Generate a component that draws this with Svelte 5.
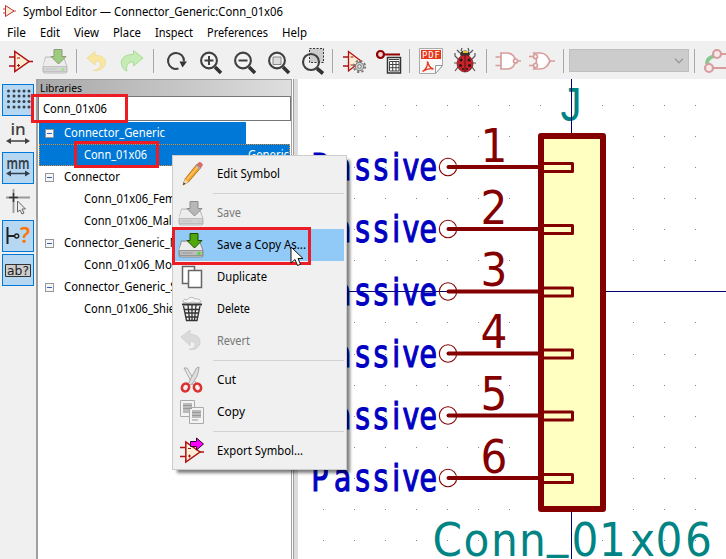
<script>
  const menus = [
    ['File', 19], ['Edit', 20], ['View', 25], ['Place', 28],
    ['Inspect', 38], ['Preferences', 61], ['Help', 25]
  ];
  const tree = [
    { name: 'Connector_Generic', w: 101, group: true, sel: 'part' },
    { name: 'Conn_01x06', w: 63, sel: 'full', desc: 'Generic' },
    { name: 'Connector', w: 56, group: true },
    { name: 'Conn_01x06_Female', w: 107 },
    { name: 'Conn_01x06_Male', w: 94 },
    { name: 'Connector_Generic_MountingPin', w: 174, group: true },
    { name: 'Conn_01x06_MountingPin', w: 140 },
    { name: 'Connector_Generic_Shielded', w: 152, group: true },
    { name: 'Conn_01x06_Shielded', w: 114 }
  ];
  const items = [
    { label: 'Edit Symbol', w: 63, icon: 'edit' }, null,
    { label: 'Save', w: 24, icon: 'save', off: true },
    { label: 'Save a Copy As...', w: 89, icon: 'save', hot: true },
    { label: 'Duplicate', w: 50, icon: 'dup' },
    { label: 'Delete', w: 33, icon: 'del' },
    { label: 'Revert', w: 33, icon: 'revert', off: true }, null,
    { label: 'Cut', w: 19, icon: 'cut' },
    { label: 'Copy', w: 28, icon: 'copy' }, null,
    { label: 'Export Symbol...', w: 86, icon: 'export' }
  ];
  const pins = [1, 2, 3, 4, 5, 6].map((n) => ({ n, y: Math.round((167 + (n - 1) * 62.15) * 2) / 2 }));
  const dots = [];
  for (let i = 0; i < 13; i++)
    for (let j = 0; j < 15; j++) dots.push([Math.round(323 + i * 31.03), Math.round(105 + j * 31.07)]);
</script>

{#snippet label(text, w, color = '#000', size = 12)}
  <svg class="label" width={w + 2} height="18" fill={color}>
    <text x="0" y="13" font-size={size} textLength={w} lengthAdjust="spacingAndGlyphs">{text}</text>
  </svg>
{/snippet}

{#snippet opamp()}
  <path d="M9 57h6M9 66h6M28 61.5h5" stroke="#b01010" stroke-width="1.4" />
  <path d="M14.8 51.5v20L29 61.5z" fill="#fbecd4" stroke="#b01010" stroke-width="1.5" />
  <path d="M17 58h3M17 65.5h3M18.5 64v3" stroke="#b01010" stroke-width="1" />
{/snippet}

{#snippet lens()}
  <circle cx="209" cy="60.5" r="7.9" fill="#f4f4f4" stroke="#404040" stroke-width="2.1" />
  <path d="M215 67l6 6" stroke="#333" stroke-width="3.6" />
{/snippet}

{#snippet drive()}
  <path d="M7 9h18l3.5 9.5v5.5l-1 1h-22l-1-1v-5.5z" fill="#d8d8d8" stroke="#8b8b8b" />
  <path d="M7.5 10h17l3 8h-23z" fill="#ececec" />
  <path d="M5 18.5h23v5H5z" fill="#bdbdbd" stroke="#888" stroke-width=".8" />
  <path d="M7 21h11" stroke="#999" /><path d="M23 20h3v3h-3z" fill="#51db34" />
  <path d="M15.5 1.5h8v7h4L20 16l-7.5-7.5h3z" fill="#50a80a" stroke="#214c08" />
{/snippet}

<div class="app">
  <div class="title">
    <svg width="14" height="16" viewBox="2 4 14 16" fill="none">
      <path d="M3 9h3M3 13h3M12 11h4" stroke="#c44" />
      <path d="M5.5 5.5v11L14 11z" fill="#fbecd4" stroke="#b33" />
    </svg>
    {@render label('Symbol Editor — Connector_Generic:Conn_01x06', 260)}
  </div>
  <nav>
    {#each menus as [m, w]}<span>{@render label(m, w)}</span>{/each}
  </nav>

  <div class="toolbar">
    <svg viewBox="4 44 34 34" fill="none">{@render opamp()}</svg>
    <svg viewBox="-0.5 -4 34 34" fill="none" opacity=".5"><g>{@render drive()}</g></svg>
    <i></i>
    <svg viewBox="81 44 34 34" fill="none">
      <path d="M87 58l8-6.5v4c8-.5 12.500 4 9.500 10-2 4-6 5.500-11 5 5-1 7.500-3.500 7-6.500-.5-2.500-2.500-3-5.500-3v4z" fill="#f9e6a1" stroke="#f0dd9c" />
    </svg>
    <svg viewBox="115 44 34 34" fill="none">
      <path d="M143 58l-9.500-7.500v4c-8-.5-13.500 4-12 10 1 4 3 6 5.500 6.500-1.500-5 .5-9 6.500-9v4z" fill="#c6ecb6" stroke="#a9dc98" />
    </svg>
    <i></i>
    <svg viewBox="158 44 34 34" fill="none">
      <path d="M178.500 68.500a8 8 0 1 1 5.500-7" stroke="#404040" stroke-width="2" />
      <path d="M179.500 61.500h7.500l-4.500 6z" fill="#333" />
    </svg>
    <svg viewBox="192 44 34 34" fill="none">
      {@render lens()}<path d="M204.500 60.500h9M209 56v9" stroke="#404040" stroke-width="2" />
    </svg>
    <svg viewBox="192 44 34 34" fill="none">
      {@render lens()}<path d="M204.500 60.500h9" stroke="#404040" stroke-width="2" />
    </svg>
    <svg viewBox="192 44 34 34" fill="none">
      {@render lens()}<path d="M205 57h8v7.500h-8z" fill="#ddd" stroke="#888" />
    </svg>
    <svg viewBox="294 44 34 34" fill="none">
      <path d="M309.500 48.500h14v14h-14z" fill="#ccc" stroke="#333" stroke-dasharray="2 1.500" />
      <circle cx="311" cy="62" r="8" stroke="#404040" stroke-width="2.100" />
      <path d="M317 68.500l6 5" stroke="#333" stroke-width="3.600" />
    </svg>
    <i></i>
    <svg viewBox="337 44 34 34" fill="none">
      <path d="M343 57h5M343 66h5" stroke="#b01010" stroke-width="1.400" />
      <path d="M348.500 51.500v19.500L361 61z" fill="#fbecd4" stroke="#b01010" stroke-width="1.300" />
      <path d="M350.500 57h3M350.500 65h3" stroke="#b01010" />
      <circle cx="359.500" cy="66.500" r="5.700" stroke="#777" stroke-width="1.800" stroke-dasharray="2.300 2.170" />
      <circle cx="359.500" cy="66.500" r="4.200" fill="#ccc" stroke="#777" />
      <circle cx="359.500" cy="66.500" r="1.800" fill="#efefef" stroke="#777" />
    </svg>
    <svg viewBox="371 44 34 34" fill="none">
      <path d="M383 54.500h17" stroke="#900000" stroke-width="2" />
      <circle cx="380.500" cy="54.500" r="3.500" fill="#f4d4d4" stroke="#900000" stroke-width="2.200" />
      <path d="M387.500 57.500h13v15.500h-13z" fill="#fff" stroke="#333" stroke-width="1.500" />
      <path d="M389.500 61.500h9.500v9.500h-9.500zM389.500 64.500h9.500M389.500 67.700h9.500M392.700 61.500v9.500M396 61.500v9.500M389 59.500h10" stroke="#444" />
    </svg>
    <i></i>
    <svg viewBox="414 44 34 34" fill="none">
      <path d="M419.500 48.500h23v17l-7 8h-16z" fill="#f7f7f7" stroke="#aaa" />
      <path d="M435.500 73.500v-8h7z" fill="#fff" stroke="#999" />
      <path d="M421 50h20v9h-20z" fill="#e8381c" />
      <text x="422" y="58" font-family="DejaVu Sans Mono" font-size="9" textLength="18" fill="#fff">PDF</text>
      <path d="M422.500 71.500c4-2 5.500-7 5-10 1 4 3 7 6 7.500-4-1-7 0-11 2.500z" stroke="#e8381c" stroke-width="1.300" />
    </svg>
    <svg viewBox="448 44 34 34" fill="none">
      <path d="M460 53l-3-3M470 53l3-3M458 59l-3-3v-3M472 59l3-3v-3M457 63h-3M473 63h3M458 67l-3 4M472 67l3 4M461 51l1-3M469 51l-1-3" stroke="#555" stroke-width="1.200" />
      <ellipse cx="465" cy="54" rx="5" ry="3.500" fill="#333" /><path d="M463 52h5" stroke="#e5c530" stroke-width="2" />
      <ellipse cx="465" cy="63.500" rx="8" ry="8.500" fill="#c8222a" stroke="#702020" stroke-width=".8" />
      <path d="M465 55v17" stroke="#401010" stroke-width=".8" />
      <g fill="#221818"><circle cx="461" cy="60" r="1.500" /><circle cx="469" cy="60" r="1.500" /><circle cx="460.500" cy="65.500" r="1.500" /><circle cx="469.500" cy="65.500" r="1.500" /><circle cx="463" cy="69" r="1" /><circle cx="467" cy="69" r="1" /></g>
    </svg>
    <i></i>
    <svg viewBox="491 44 34 34" fill="none" stroke="#d89c9c" stroke-width="1.700">
      <path d="M495.500 57h5M495.500 65.500h5M517 61h4" />
      <path d="M501 53h6c11 0 11 16 0 16h-6z" fill="#fff" /><circle cx="515.500" cy="61" r="2" fill="#fff" />
    </svg>
    <svg viewBox="525 44 34 34" fill="none" stroke="#d89c9c" stroke-width="1.700">
      <path d="M529 56.500h5M529 65.500h5M550 61h5" />
      <path d="M534 53h6c6 0 8 4 10 8-2 4-4 8-10 8h-6q5-8 0-16z" fill="#fff" />
      <circle cx="535.500" cy="56.500" r="2" fill="#fff" /><circle cx="535.500" cy="65.500" r="2" fill="#fff" />
    </svg>
    <i></i>
    <div class="combo"><svg width="10" height="6" viewBox="0 0 10 6" fill="none"><path d="M1 .8l4 4 4-4" stroke="#999" stroke-width="1.300" /></svg></div>
    <i></i>
    <svg viewBox="699 44 34 34" fill="none">
      <path d="M713 68h13M720 54h8" stroke="#d89c9c" stroke-width="2.200" />
      <path d="M707 64c0-5 2-6 7-8" stroke="#88c890" stroke-width="4" />
      <circle cx="709" cy="68" r="4" fill="#f5e9e9" stroke="#d89c9c" stroke-width="2.200" />
      <circle cx="717" cy="54" r="4" fill="#f5e9e9" stroke="#d89c9c" stroke-width="2.200" />
    </svg>
  </div>

  <main>
    <aside class="side">
      <div class="on"><svg viewBox="0 0 32 32">
        {#each [6, 11, 16.500, 22] as y}{#each [6.500, 12, 17, 22, 27] as x}<circle cx={x} cy={y + 1} r="1.500" fill="#36414c" />{/each}{/each}
      </svg></div>
      <div><svg viewBox="0 0 32 32">
        <text x="16" y="17" font-size="17" font-weight="500" text-anchor="middle" fill="#404040">in</text>
        <path d="M6 23h20" stroke="#404040" stroke-width="1.500" /><path d="M4 23l5-3v6zM28 23l-5-3v6z" fill="#404040" />
      </svg></div>
      <div class="on"><svg viewBox="0 0 32 32">
        <text x="4.500" y="16.500" font-size="16" font-weight="600" textLength="23" lengthAdjust="spacingAndGlyphs" fill="#333f4a">mm</text>
        <path d="M6 21.500h20" stroke="#333f4a" stroke-width="1.500" /><path d="M4 21.500l5-3v6zM28 21.500l-5-3v6z" fill="#333f4a" />
      </svg></div>
      <div><svg viewBox="0 0 32 32" fill="none">
        <path d="M4 11.500h24M11.500 3v24" stroke="#999" stroke-width="1.800" />
        <path d="M7 11.500h9M11.500 7v9" stroke="#333" stroke-width="1.500" />
        <path d="M15.500 15v11l2.500-2 2 4 2-1-2-4h3.500z" fill="#eee" stroke="#666" />
      </svg></div>
      <div class="on"><svg viewBox="0 0 32 32" fill="none">
        <path d="M5.500 7v17M6 16h7" stroke="#222" stroke-width="2" /><circle cx="14.700" cy="16" r="2" stroke="#222" stroke-width="1.400" />
        <text x="18" y="23" font-size="21" font-weight="600" textLength="10" lengthAdjust="spacingAndGlyphs" fill="#ff7300">?</text>
      </svg></div>
      <div class="on"><svg viewBox="0 0 32 32" fill="none">
        <path d="M3.500 10.500h25v12h-25z" fill="#ccc" stroke="#333" />
        <text x="5" y="21" font-family="DejaVu Sans" font-size="12.500" textLength="22" lengthAdjust="spacingAndGlyphs" fill="#222">ab?</text>
      </svg></div>
    </aside>

    <section class="libs">
      <header>{@render label('Libraries', 42, '#000', 11)}</header>
      <div class="search">{@render label('Conn_01x06', 64)}</div>
      <div class="tree">
        {#each tree as row}
          <div class="row {row.sel ?? ''}" class:child={!row.group}>
            {#if row.group}<svg class="box" width="9" height="9"><rect x=".5" y=".5" width="8" height="8" fill="#f4f6fa" stroke="#969696" /><path d="M2 4.500h5" stroke="#3a5fb0" /></svg>{/if}
            {@render label(row.name, row.w, row.sel ? '#fff' : '#000')}
            {#if row.desc}<span class="desc">{@render label(row.desc, 41, '#fff')}</span>{/if}
          </div>
        {/each}
      </div>
    </section>
    <div class="sash"></div>

    <svg class="canvas" width="428" height="480" viewBox="298 79 428 480" fill="none">
      {#each dots as [x, y]}<rect {x} {y} width="1" height="1" fill="#888" />{/each}
      <text class="teal jay" x="560.500" y="121" font-size="48" textLength="21" lengthAdjust="spacingAndGlyphs">J</text>
      <path d="M571.500 79v480M298 291.500h428" stroke="#000070" />
      <rect x="541" y="136" width="62" height="373" fill="#ffffc2" stroke="#840000" stroke-width="6" stroke-linejoin="round" />
      {#each pins as p}
        <text class="type" transform="translate(312 {p.y + 13}) scale(.85 1)" x="-1 26 51 72.300 94.500 106.500 126.500" y="0" font-size="37">Passive</text>
        <text class="num" x="494" y={p.y - 5.500} font-size="47" text-anchor="middle">{p.n}</text>
        <circle cx="448" cy={p.y} r="8.700" stroke="#840000" stroke-width="1.100" />
        <path d="M448.500 {p.y}H540" stroke="#840000" stroke-width="4" stroke-linecap="round" />
        <rect x="542.500" y={p.y - 3.500} width="30" height="8" fill="#ffffc2" stroke="#840000" stroke-width="3" stroke-linejoin="round" />
      {/each}
      <path d="M541 136v373" stroke="#840000" stroke-width="6" />
      <text class="teal" font-size="47" x="432.600 463.600 491 519 547 571.500 599 630 655.500 685" y="556 556 556 556 547 556">Conn_01x06</text>
    </svg>
  </main>

  <div class="popup">
    {#each items as it}
      {#if it}
        <div class="item" class:hot={it.hot}>
          <svg class="mi" width="32" height="32" fill="none" opacity={it.off ? 0.55 : 1} class:gray={it.off}>
            {#if it.icon === 'edit'}
              <path d="M7 27l2-6L21 6l4 3.500L12.500 24z" fill="#f4a128" stroke="#a86a1c" stroke-width=".8" />
              <path d="M7 27l2-6 3.500 3z" fill="#f0d6aa" /><path d="M7 27l.8-2.500 1.500 1.300z" fill="#222" />
              <path d="M20 7.500l3-3.500q3 0 4 3L24 11z" fill="#d96b6b" /><path d="M20 7.500l4 3.500" stroke="#aaa" stroke-width="2" />
              <path d="M11 21.500L21.500 9" stroke="#ffc870" stroke-width="1.300" />
            {:else if it.icon === 'save'}
              <g transform="translate(-1.500 3)">{@render drive()}</g>
            {:else if it.icon === 'dup'}
              <path d="M6.500 5.500h12v17h-12z" fill="#fff" stroke="#666" stroke-width="1.500" />
              <path d="M12.500 9.500h13v17h-13z" fill="#fff" stroke="#666" stroke-width="1.500" />
            {:else if it.icon === 'del'}
              <path d="M7 9q0-4 4-2 4-5 8-1 5-1 6 3-4 2-8 0-5 2-10 0z" fill="#f7f7f7" stroke="#bbb" />
              <path d="M6 11.500h20" stroke="#333" stroke-width="2" />
              <path d="M7.500 13l3 14.500h10.500l3-14.500M8.500 16.500h15M9 20h14M10 24h12M12 12l1.500 15M16 12v15M20 12l-1.500 15" stroke="#333" stroke-width="1.300" />
            {:else if it.icon === 'revert'}
              <path d="M5 12l9-7v4.500c8-.5 12 5 9 11-2 3.500-5 4.500-10 4 5-1 7-3.500 6-6-1-2-3-2-5-2v4z" fill="#c9c9c9" stroke="#b5b5b5" />
            {:else if it.icon === 'cut'}
              <path d="M8 4l3 0 9 15-3 2z" fill="#e8e8e8" stroke="#999" stroke-width=".8" /><path d="M23 3l-2.500 1L12 20l3 1q8-9 8-18z" fill="#ddd" stroke="#999" stroke-width=".8" />
              <ellipse cx="9.500" cy="23.500" rx="3.500" ry="4" transform="rotate(25 9.500 23.500)" stroke="#dc3030" stroke-width="2.600" />
              <ellipse cx="21.500" cy="23.500" rx="3.500" ry="4" transform="rotate(-25 21.500 23.500)" stroke="#dc3030" stroke-width="2.600" />
            {:else if it.icon === 'copy'}
              <path d="M4.500 4.500h14v16h-14z" fill="#f3f3f3" stroke="#aaa" /><path d="M7 7h9v10h-9z" fill="#bbb" />
              <path d="M13.500 11.500h14v16h-14z" fill="#f3f3f3" stroke="#aaa" /><path d="M16 14h9v8h-9z" fill="#bbb" />
              <path d="M7 9.500h9M7 12.500h9M16 16.500h9M16 19.500h9M16 24h6" stroke="#999" />
            {:else}
              <g transform="translate(-5 -44.500)">{@render opamp()}</g>
              <path d="M14.500 6.500h6v-3.500l7 6-7 6v-3.500h-6z" fill="#f0f" stroke="#303" />
            {/if}
          </svg>
          {@render label(it.label, it.w, it.off ? '#777' : '#000')}
        </div>
      {:else}<hr />{/if}
    {/each}
  </div>

  <div class="mark" style="left:31px;top:94px;width:97px;height:29px"></div>
  <div class="mark" style="left:74px;top:141px;width:85px;height:27px"></div>
  <div class="mark" style="left:172px;top:227px;width:139px;height:38px"></div>
  <svg class="pointer" width="14" height="21"><path d="M1 1v16l4-3.500 2.500 6 3-1.200L8 12.500h5z" fill="#fff" stroke="#111" /></svg>
</div>

<style>
  :global(body) { margin: 0; overflow: hidden; }
  .app { position: relative; width: 726px; height: 559px; overflow: hidden; display: flex; flex-direction: column; background: #fff; font-family: "Noto Sans", "Open Sans", sans-serif; }
  svg { display: block; flex: none; }
  .label { overflow: visible; }
  .title { height: 24px; display: flex; align-items: center; padding-left: 2px; gap: 7px; box-sizing: border-box; }
  nav { height: 17px; display: flex; align-items: center; padding-left: 7px; gap: 12px; }
  .toolbar { height: 38px; box-sizing: border-box; padding: 3px 0 0 4px; background: #f0f0f0; display: flex; flex: none; overflow: hidden; }
  .toolbar > svg { width: 34px; height: 34px; }
  .toolbar i { flex: none; width: 1px; height: 24px; margin: 5px 4px; background: #a8a8a8; }
  .combo { flex: none; width: 120px; height: 23px; margin: 5px 1px; box-sizing: border-box; border: 1px solid #bfbfbf; background: #ccc; display: flex; align-items: center; justify-content: flex-end; padding-right: 4px; }
  main { flex: 1; display: flex; min-height: 0; }
  .side { width: 36px; box-sizing: border-box; padding: 5px 0 0 2px; background: #f0f0f0; display: flex; flex-direction: column; gap: 2px; }
  .side div { width: 32px; height: 32px; }
  .side .on { background: #b5d7f1; box-shadow: inset 0 0 0 1px #0078d7; }
  .libs { width: 256px; box-sizing: border-box; border-left: 2px solid #a0a0a0; border-top: 1px solid #a0a0a0; border-right: 1px solid #a0a0a0; display: flex; flex-direction: column; overflow: hidden; }
  .libs header { height: 16px; display: flex; align-items: center; padding-left: 2px; background: linear-gradient(90deg, #a8a8a8, #dedede); }
  .search { height: 25px; box-sizing: border-box; border: 1px solid #777; display: flex; align-items: center; padding-left: 4px; }
  .tree { padding: 1px 1px 0 1px; flex: 1; }
  .row { position: relative; height: 22px; display: flex; align-items: center; gap: 10px; padding-left: 6px; box-sizing: border-box; overflow: hidden; }
  .row.child { padding-left: 45px; }
  .row.part { width: 207px; background: #0078d7; }
  .row.full { background: #0078d7; outline: 1px dotted #e58a2c; outline-offset: -1px; }
  .desc { margin-left: auto; margin-right: -1px; }
  .sash { width: 6px; box-sizing: border-box; background: linear-gradient(90deg, #fff 1px, #a0a0a0 1px, #a0a0a0 2px, #dcdcdc 2px); }
  .canvas { font-family: "DejaVu Sans Condensed", "DejaVu Sans", sans-serif; font-stretch: condensed; }
  .teal { fill: #008484; }
  .jay { font-family: "Liberation Sans", sans-serif; }
  .num { fill: #840000; }
  .type { fill: #0000c2; stroke: #0000c2; stroke-width: 1.1px; }
  .popup { position: absolute; left: 172px; top: 155px; width: 175px; height: 315px; box-sizing: border-box; border: 1px solid #ccc; padding: 2px; background: #f0f0f0; box-shadow: 4px 4px 3px -1px rgba(0,0,0,.5); }
  .item { height: 32px; display: flex; align-items: center; gap: 9px; padding-left: 1px; }
  .item.hot { background: #91c9f7; }
  .gray { filter: grayscale(1); }
  hr { border: 0; height: 1px; margin: 3px 0 3px 38px; background: #d2d2d2; }
  .mark { position: absolute; box-sizing: border-box; border: 3px solid #ed1c24; }
  .pointer { position: absolute; left: 290px; top: 246px; }
</style>
